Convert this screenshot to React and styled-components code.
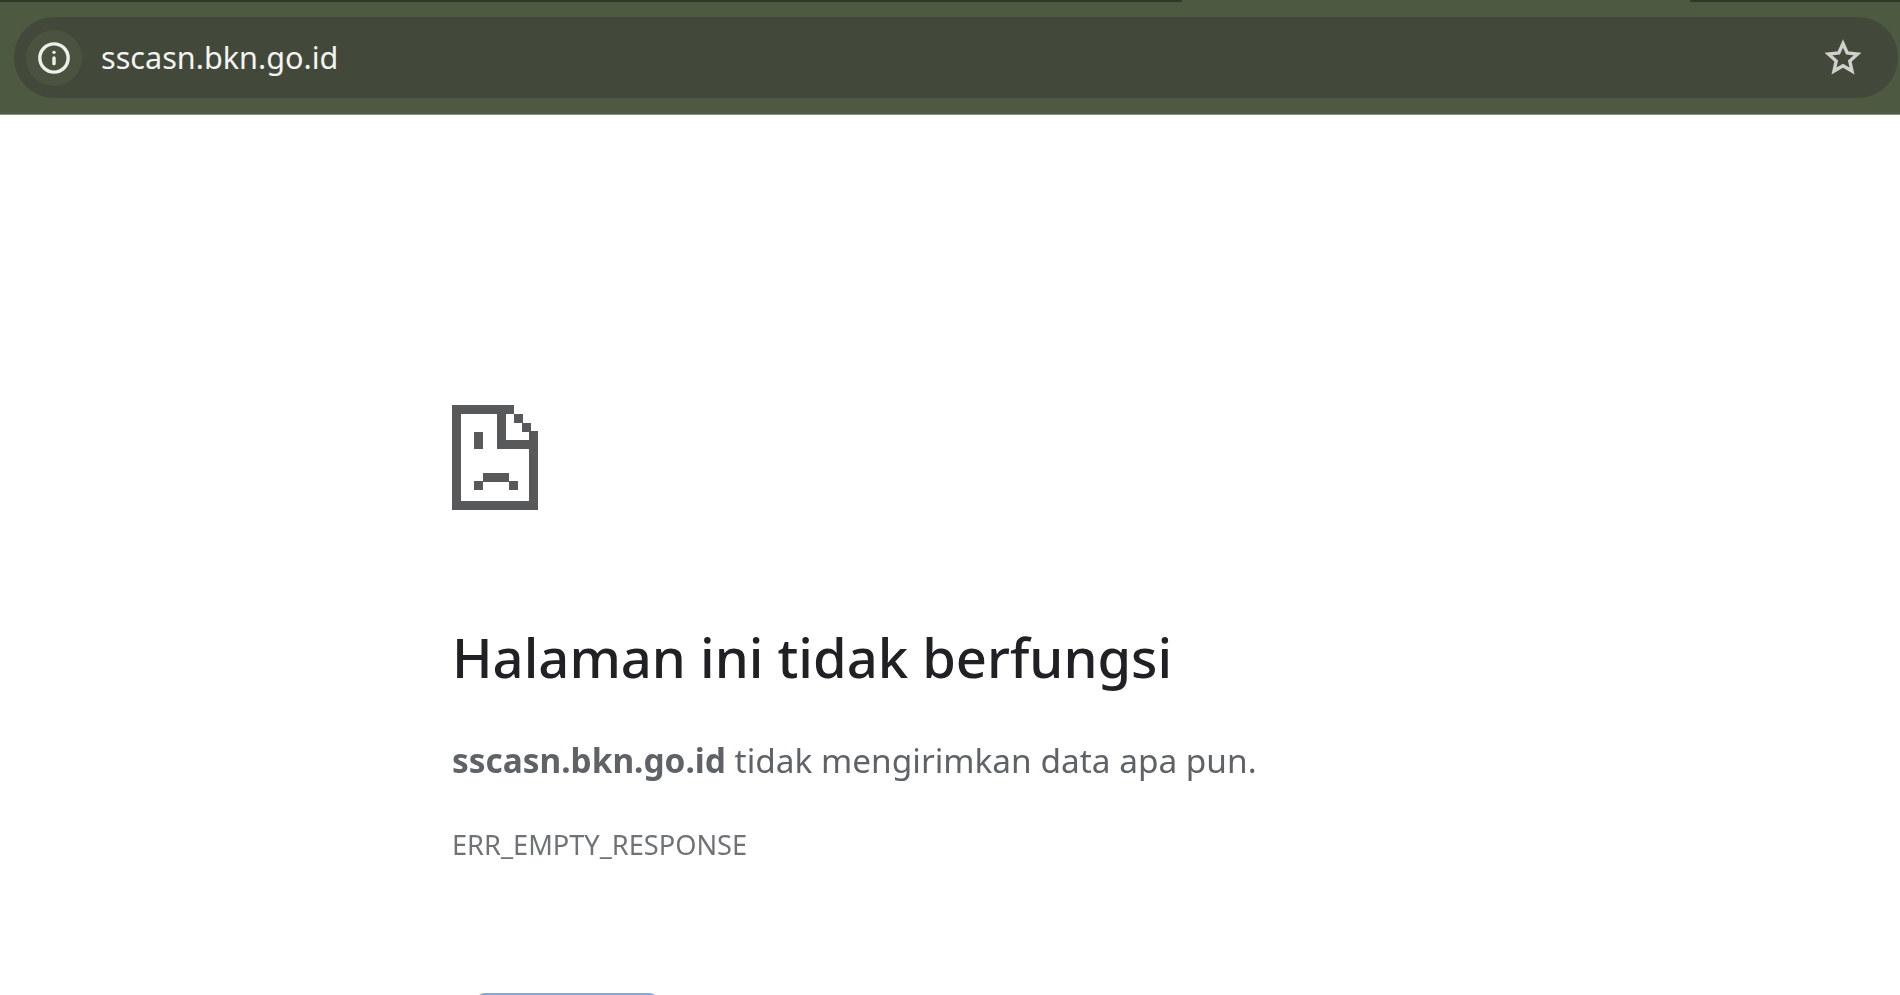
import React from "react";
import styled, { createGlobalStyle } from "styled-components";
import { Info } from "lucide-react";

const Global = createGlobalStyle`
  html, body { margin: 0; padding: 0; height: 100%; background: #fff; overflow: hidden; }
  #root { height: 995px; overflow: hidden; }
`;
const Page = styled.div`
  position: relative;
  height: 995px;
  display: flex;
  flex-direction: column;
  overflow: hidden;
  font-family: "Noto Sans", "Open Sans", sans-serif;
  filter: blur(0.5px);
`;
const Toolbar = styled.header`
  height: 115px;
  box-sizing: border-box;
  background: #4d5940;
  border-bottom: 1px solid #8a9180;
  display: flex;
  flex-direction: column;
  flex: none;
`;
const TabStrip = styled.div`
  height: 17px;
  display: flex;
  justify-content: space-between;
  align-items: flex-start;
  flex: none;
`;
const TabEdge = styled.div`
  width: ${(p) => p.$width}px;
  height: 2px;
  background: #2f3827;
  border-radius: ${(p) => (p.$side === "left" ? "0 0 3px 0" : "0 0 0 3px")};
`;
const Omnibox = styled.div`
  height: 81px;
  margin: 0 2px 0 14px;
  padding: 0 36px 0 12px;
  border-radius: 40px;
  background: #43493a;
  display: flex;
  align-items: center;
  flex: none;
`;
const IconChip = styled.div`
  width: 56px;
  height: 56px;
  border-radius: 50%;
  background: #4a5340;
  display: flex;
  align-items: center;
  justify-content: center;
  color: #eef0ea;
  flex: none;
`;
const Url = styled.span`
  margin: 0 0 2px 19px;
  color: #f3f4f1;
  font-size: 30.6px;
  flex: 1;
`;
const StarIcon = styled.svg`
  display: block;
  width: 38px;
  height: 38px;
  flex: none;
  fill: none;
  stroke: #cfd1cc;
  stroke-width: 3.4;
  stroke-linejoin: miter;
`;
const Content = styled.main`
  padding: 290px 0 0 452px;
  flex: 1;
`;
const SadFile = styled.svg`
  display: block;
  width: 86px;
  height: 105px;
`;
const Heading = styled.h1`
  margin: 111px 0 0;
  color: #202124;
  font-size: 54.3px;
  line-height: 72px;
  font-weight: 500;
`;
const Message = styled.p`
  margin: 43px 0 0;
  color: #5f6368;
  font-size: 33.4px;
  line-height: 48px;
`;
const Strong = styled.b`
  font-weight: 700;
`;
const Code = styled.div`
  margin: 43px 0 0;
  color: #6f7377;
  font-size: 27.2px;
  line-height: 36px;
`;
const ReloadButton = styled.div`
  position: absolute;
  left: 475px;
  top: 993px;
  width: 184px;
  height: 60px;
  border-radius: 10px;
  background: #7aa9ee;
`;

export default function App() {
  return (
    <Page>
      <Global />
      <Toolbar>
        <TabStrip>
          <TabEdge $width={1182} $side="left" />
          <TabEdge $width={210} $side="right" />
        </TabStrip>
        <Omnibox>
          <IconChip>
            <Info size={34} strokeWidth={2.4} />
          </IconChip>
          <Url>sscasn.bkn.go.id</Url>
          <StarIcon viewBox="0 0 38 38">
            <polygon points="19,4.5 23.2,14 33.5,15 25.8,22 28,32 19,26.8 10,32 12.2,22 4.5,15 14.8,14" />
          </StarIcon>
        </Omnibox>
      </Toolbar>
      <Content>
        <SadFile viewBox="0 0 86 105" fill="#58595b">
          <rect x="0" y="0" width="9" height="105" />
          <rect x="0" y="0" width="62" height="9" />
          <rect x="0" y="96" width="86" height="9" />
          <rect x="77" y="26" width="9" height="79" />
          <rect x="45" y="0" width="9" height="44" />
          <rect x="45" y="35" width="41" height="9" />
          <rect x="62" y="9" width="9" height="9" />
          <rect x="70" y="18" width="9" height="9" />
          <rect x="22" y="27" width="9" height="17" />
          <rect x="31" y="68" width="26" height="9" />
          <rect x="22" y="76" width="9" height="9" />
          <rect x="57" y="76" width="9" height="9" />
        </SadFile>
        <Heading>Halaman ini tidak berfungsi</Heading>
        <Message>
          <Strong>sscasn.bkn.go.id</Strong> tidak mengirimkan data apa pun.
        </Message>
        <Code>ERR_EMPTY_RESPONSE</Code>
      </Content>
      <ReloadButton />
    </Page>
  );
}
